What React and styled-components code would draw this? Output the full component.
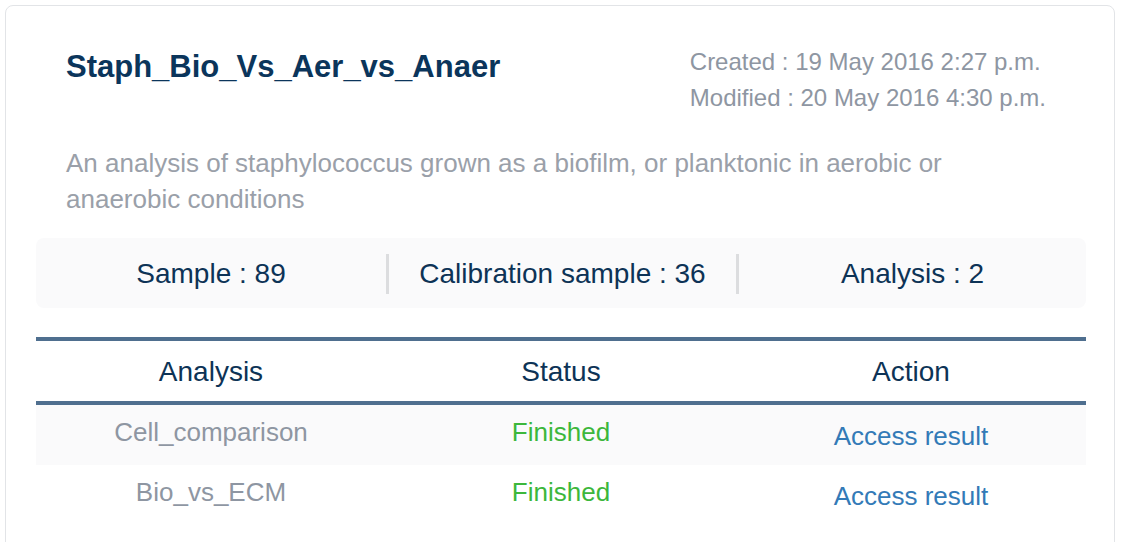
import React from 'react';
import styled, { createGlobalStyle } from 'styled-components';

const GlobalStyle = createGlobalStyle`
  body {
    margin: 0;
    background: #ffffff;
    font-family: "Liberation Sans", Arial, Helvetica, sans-serif;
  }
`;

const Page = styled.div`
  padding: 5px 11px 0 5px;
  height: 542px;
  box-sizing: border-box;
  overflow: hidden;
`;

const Card = styled.div`
  border: 1px solid #e2e4e7;
  border-radius: 8px;
  padding: 0 28px 40px 30px;
  min-height: 600px;
  box-sizing: border-box;
`;

const Header = styled.div`
  display: flex;
  justify-content: space-between;
  align-items: flex-start;
  padding: 0 30px;
`;

const Title = styled.h1`
  margin: 43px 0 0;
  font-size: 31px;
  font-weight: 700;
  color: #0b355b;
  line-height: 36px;
`;

const Dates = styled.div`
  margin-top: 38px;
  margin-right: 10px;
  font-size: 24px;
  line-height: 36px;
  color: #8e96a2;
`;

const Description = styled.p`
  margin: 29px 0 0;
  padding: 0 90px 0 30px;
  font-size: 26px;
  line-height: 36px;
  color: #9aa0a9;
`;

const Stats = styled.div`
  margin-top: 21px;
  display: grid;
  grid-template-columns: 1fr 1fr 1fr;
  align-items: center;
  height: 70px;
  padding-top: 2px;
  box-sizing: border-box;
  background: #fafafb;
  border-radius: 8px;
`;

const Stat = styled.div`
  text-align: center;
  font-size: 28px;
  color: #0d3356;
  border-left: ${(p) => (p.$first ? 'none' : '3px solid #dcdddf')};
  line-height: 40px;
`;

const Table = styled.table`
  width: 100%;
  margin-top: 29px;
  border-collapse: collapse;
  table-layout: fixed;
  border-top: 4px solid #4f6f8f;
`;

const Th = styled.th`
  font-weight: 400;
  font-size: 28px;
  color: #0d3356;
  height: 58px;
  border-bottom: 4px solid #4f6f8f;
  padding: 2px 0 0;
`;

const Row = styled.tr`
  background: ${(p) => (p.$striped ? '#fafafb' : 'transparent')};
`;

const Td = styled.td`
  text-align: center;
  height: 55px;
  padding: 0 0 5px;
  font-size: 26px;
  color: ${(p) => p.$color || '#8e96a2'};
`;

const Link = styled.a`
  display: inline-block;
  padding-top: 8px;
  color: #337ab7;
  text-decoration: none;
  cursor: pointer;
`;

const rows = [
  { name: 'Cell_comparison', status: 'Finished' },
  { name: 'Bio_vs_ECM', status: 'Finished' },
];

export default function App() {
  return (
    <>
      <GlobalStyle />
      <Page>
        <Card>
          <Header>
            <Title>Staph_Bio_Vs_Aer_vs_Anaer</Title>
            <Dates>
              <div>Created : 19 May 2016 2:27 p.m.</div>
              <div>Modified : 20 May 2016 4:30 p.m.</div>
            </Dates>
          </Header>
          <Description>
            An analysis of staphylococcus grown as a biofilm, or planktonic in aerobic or
            anaerobic conditions
          </Description>
          <Stats>
            <Stat $first>Sample : 89</Stat>
            <Stat>Calibration sample : 36</Stat>
            <Stat>Analysis : 2</Stat>
          </Stats>
          <Table>
            <thead>
              <tr>
                <Th>Analysis</Th>
                <Th>Status</Th>
                <Th>Action</Th>
              </tr>
            </thead>
            <tbody>
              {rows.map((r, i) => (
                <Row key={r.name} $striped={i % 2 === 0}>
                  <Td>{r.name}</Td>
                  <Td $color="#3cb73c">{r.status}</Td>
                  <Td>
                    <Link>Access result</Link>
                  </Td>
                </Row>
              ))}
            </tbody>
          </Table>
        </Card>
      </Page>
    </>
  );
}
